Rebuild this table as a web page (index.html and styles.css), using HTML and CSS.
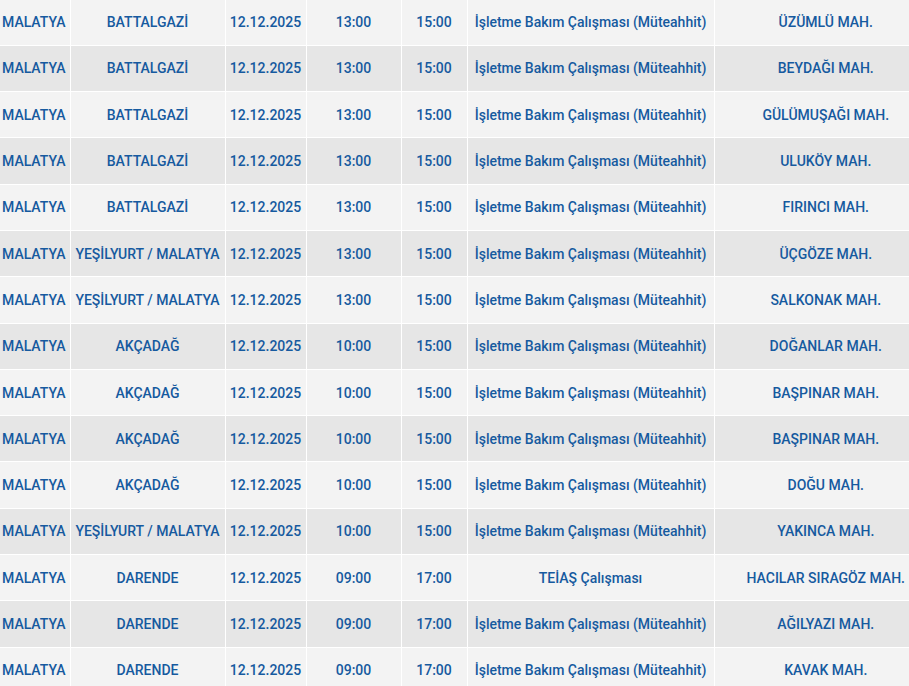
FILE: index.html
```html
<!DOCTYPE html>
<html lang="tr">
<head>
<meta charset="utf-8">
<link rel="stylesheet" href="styles.css">
</head>
<body>
<table class="outages">
<colgroup>
<col class="c-il"><col class="c-ilce"><col class="c-tarih"><col class="c-bas"><col class="c-bit"><col class="c-neden"><col class="c-mah">
</colgroup>
<tbody>
<tr><td>MALATYA</td><td>BATTALGAZİ</td><td>12.12.2025</td><td>13:00</td><td>15:00</td><td>İşletme Bakım Çalışması (Müteahhit)</td><td>ÜZÜMLÜ MAH.</td></tr>
<tr><td>MALATYA</td><td>BATTALGAZİ</td><td>12.12.2025</td><td>13:00</td><td>15:00</td><td>İşletme Bakım Çalışması (Müteahhit)</td><td>BEYDAĞI MAH.</td></tr>
<tr><td>MALATYA</td><td>BATTALGAZİ</td><td>12.12.2025</td><td>13:00</td><td>15:00</td><td>İşletme Bakım Çalışması (Müteahhit)</td><td>GÜLÜMUŞAĞI MAH.</td></tr>
<tr><td>MALATYA</td><td>BATTALGAZİ</td><td>12.12.2025</td><td>13:00</td><td>15:00</td><td>İşletme Bakım Çalışması (Müteahhit)</td><td>ULUKÖY MAH.</td></tr>
<tr><td>MALATYA</td><td>BATTALGAZİ</td><td>12.12.2025</td><td>13:00</td><td>15:00</td><td>İşletme Bakım Çalışması (Müteahhit)</td><td>FIRINCI MAH.</td></tr>
<tr><td>MALATYA</td><td>YEŞİLYURT / MALATYA</td><td>12.12.2025</td><td>13:00</td><td>15:00</td><td>İşletme Bakım Çalışması (Müteahhit)</td><td>ÜÇGÖZE MAH.</td></tr>
<tr><td>MALATYA</td><td>YEŞİLYURT / MALATYA</td><td>12.12.2025</td><td>13:00</td><td>15:00</td><td>İşletme Bakım Çalışması (Müteahhit)</td><td>SALKONAK MAH.</td></tr>
<tr><td>MALATYA</td><td>AKÇADAĞ</td><td>12.12.2025</td><td>10:00</td><td>15:00</td><td>İşletme Bakım Çalışması (Müteahhit)</td><td>DOĞANLAR MAH.</td></tr>
<tr><td>MALATYA</td><td>AKÇADAĞ</td><td>12.12.2025</td><td>10:00</td><td>15:00</td><td>İşletme Bakım Çalışması (Müteahhit)</td><td>BAŞPINAR MAH.</td></tr>
<tr><td>MALATYA</td><td>AKÇADAĞ</td><td>12.12.2025</td><td>10:00</td><td>15:00</td><td>İşletme Bakım Çalışması (Müteahhit)</td><td>BAŞPINAR MAH.</td></tr>
<tr><td>MALATYA</td><td>AKÇADAĞ</td><td>12.12.2025</td><td>10:00</td><td>15:00</td><td>İşletme Bakım Çalışması (Müteahhit)</td><td>DOĞU MAH.</td></tr>
<tr><td>MALATYA</td><td>YEŞİLYURT / MALATYA</td><td>12.12.2025</td><td>10:00</td><td>15:00</td><td>İşletme Bakım Çalışması (Müteahhit)</td><td>YAKINCA MAH.</td></tr>
<tr><td>MALATYA</td><td>DARENDE</td><td>12.12.2025</td><td>09:00</td><td>17:00</td><td>TEİAŞ Çalışması</td><td>HACILAR SIRAGÖZ MAH.</td></tr>
<tr><td>MALATYA</td><td>DARENDE</td><td>12.12.2025</td><td>09:00</td><td>17:00</td><td>İşletme Bakım Çalışması (Müteahhit)</td><td>AĞILYAZI MAH.</td></tr>
<tr><td>MALATYA</td><td>DARENDE</td><td>12.12.2025</td><td>09:00</td><td>17:00</td><td>İşletme Bakım Çalışması (Müteahhit)</td><td>KAVAK MAH.</td></tr>
</tbody>
</table>
</body>
</html>
```
FILE: styles.css
```css
html, body {
  margin: 0;
  padding: 0;
  background: #ffffff;
  overflow: hidden;
}

.outages {
  width: 937px;
  table-layout: fixed;
  border-collapse: collapse;
  margin-top: -1px;
  font-family: Roboto, "Liberation Sans", Arial, sans-serif;
  font-size: 14px;
  font-weight: 500;
  color: #165a9f;
}

.c-il { width: 70px; }
.c-ilce { width: 155px; }
.c-tarih { width: 81px; }
.c-bas { width: 95px; }
.c-bit { width: 66px; }
.c-neden { width: 247px; }
.c-mah { width: 223px; }

.outages td {
  height: 46.3px;
  padding: 0;
  box-sizing: border-box;
  text-align: center;
  vertical-align: middle;
  white-space: nowrap;
  border: 1px solid #ffffff;
  border-top: 0;
}

.outages td:first-child {
  border-left: 0;
  padding-right: 2px;
}

.outages td:last-child {
  border-right: 0;
}

.outages tr:nth-child(odd) td {
  background: #f3f3f3;
}

.outages tr:nth-child(even) td {
  background: #e6e6e6;
}
```
